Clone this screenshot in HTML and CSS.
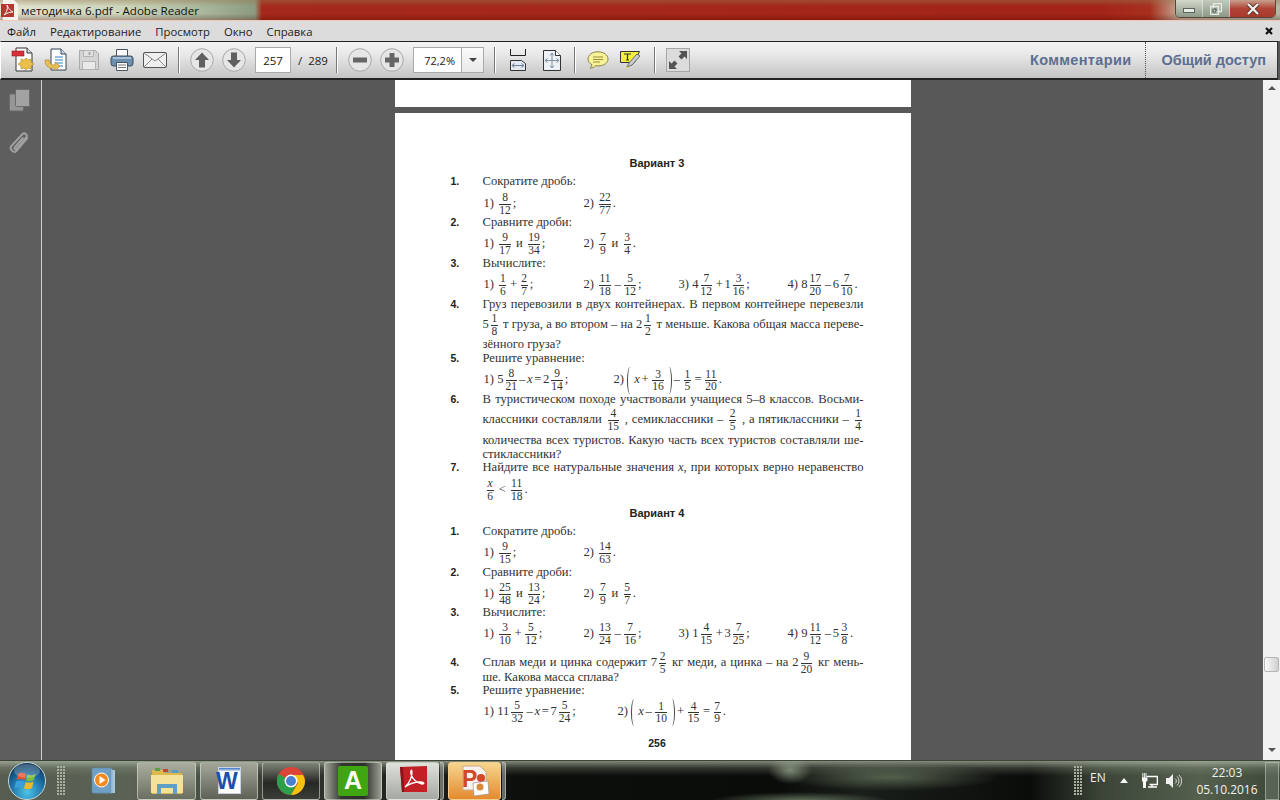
FILE: index.html
```html
<!DOCTYPE html>
<html lang="ru">
<head>
<meta charset="utf-8">
<title>методичка 6.pdf - Adobe Reader</title>
<link rel="stylesheet" href="styles.css">
</head>
<body>
<div class="app">
  <header class="titlebar">
    <svg class="app-icon" width="18" height="20" viewBox="0 0 18 20"><path d="M2 0h11l4 4v16H2z" fill="#f4f0ec"/><path d="M0 4h13v13H0z" fill="#b3201c" opacity=".9"/><path d="M3 15c3-3 4-7 3-10 1 2 2 5 6 7-3 0-6 1-9 3z" fill="none" stroke="#fff" stroke-width="1"/></svg>
    <span class="title-text">методичка 6.pdf - Adobe Reader</span>
    <div class="win-btns">
      <span class="win-btn win-min"><svg width="12" height="6" viewBox="0 0 12 6"><rect x=".5" y=".5" width="11" height="4" fill="#e8ece6" stroke="#59635a"/></svg></span>
      <span class="win-btn win-max"><svg width="12" height="12" viewBox="0 0 12 12"><path d="M3.5.5h8v8h-8z M.5 3.5h8v8h-8z" fill="none" stroke="#e8ece6" stroke-width="1.3"/><path d="M3 6h3v3H3z" fill="none" stroke="#48524a"/></svg></span>
      <span class="win-btn win-close"><svg width="14" height="12" viewBox="0 0 14 12"><path d="M2 1l10 10M12 1L2 11" stroke="#59302a" stroke-width="4"/><path d="M2 1l10 10M12 1L2 11" stroke="#eef0ee" stroke-width="2.4"/></svg></span>
    </div>
  </header>

  <nav class="menubar">
    <span>Файл</span><span>Редактирование</span><span>Просмотр</span><span>Окно</span><span>Справка</span>
    <svg class="menu-close" width="8" height="8" viewBox="0 0 8 8"><path d="M1 1l6 6M7 1L1 7" stroke="#111" stroke-width="2.2"/></svg>
  </nav>

  <div class="toolbar">
    <span class="tb tb33"><svg width="24" height="26" viewBox="0 0 24 26"><path d="M5 1h11l5 5v18H5z" fill="#fff" stroke="#333"/><path d="M16 1v5h5" fill="#ddd" stroke="#333"/><rect x="1" y="4" width="12" height="5" fill="#d8303a" stroke="#8f1b22" stroke-width=".6"/><path d="M15 11l2 2 3-1 0 3 3 2-3 2 0 3-3-1-2 2-2-2-3 1 0-3-3-2 3-2 0-3 3 1z" fill="#eac04a" stroke="#b58a22" stroke-width=".6"/></svg></span>
    <span class="tb tb33"><svg width="24" height="24" viewBox="0 0 24 24"><path d="M7 1h10l5 5v16H7z" fill="#fff" stroke="#345"/><path d="M17 1v5h5" fill="#cde" stroke="#345"/><path d="M11 9h8M11 12h8M11 15h8M12 18h7" stroke="#2d86c7" stroke-width="1.2"/><path d="M1 12c0 7 5 9 10 8v3l5-5-5-4v3c-4 0-6-2-6-5z" fill="#e9bf58" stroke="#b08a30" stroke-width=".7"/></svg></span>
    <span class="tb tb33"><svg width="22" height="22" viewBox="0 0 22 22"><path d="M1.500 1.500h16l3 3v16h-19z" fill="#d4d4d4" stroke="#aaa"/><path d="M5.500 1.500h10v6h-10z" fill="#e2e2e2" stroke="#b3b3b3"/><path d="M4.500 12.500h13v8h-13z" fill="#e9e9e9" stroke="#b3b3b3"/><path d="M11.500 3v3" stroke="#aaa" stroke-width="2"/></svg></span>
    <span class="tb tb33"><svg width="24" height="24" viewBox="0 0 24 24"><path d="M6.500 1.500h11v7h-11z" fill="#fff" stroke="#4b5560"/><rect x="1" y="8" width="22" height="10" rx="2.500" fill="#6d8fae" stroke="#3c4c5c"/><rect x="3" y="9" width="18" height="2" fill="#a9c1d6"/><path d="M6.500 14.500h11v8h-11z" fill="#fff" stroke="#4b5560"/><path d="M8 17h8M8 19.500h8" stroke="#777"/></svg></span>
    <span class="tb tb33"><svg width="24" height="16" viewBox="0 0 24 16"><rect x=".5" y=".5" width="23" height="15" rx="1" fill="#f0f0f0" stroke="#555"/><path d="M1 1l11 8 11-8M1 15l8-8M23 15l-8-8" fill="none" stroke="#888"/></svg></span>
    <span class="sep sep7"></span>
    <span class="tb tb32 ml7"><svg width="24" height="24" viewBox="0 0 24 24"><circle cx="12" cy="12" r="11.300" fill="#e6e6e6" stroke="#a8a8a8"/><path d="M12 4.500l7 7.500h-4v7.500H9V12H5z" fill="#606060"/></svg></span>
    <span class="tb tb32"><svg width="24" height="24" viewBox="0 0 24 24"><circle cx="12" cy="12" r="11.300" fill="#e6e6e6" stroke="#a8a8a8"/><path d="M12 19.500L5 12h4V4.500h6V12h4z" fill="#606060"/></svg></span>
    <span class="field page-field">257</span>
    <span class="page-total">/&nbsp; 289</span>
    <span class="sep"></span>
    <span class="tb tb32 ml7"><svg width="24" height="24" viewBox="0 0 24 24"><circle cx="12" cy="12" r="11.300" fill="#e6e6e6" stroke="#a8a8a8"/><rect x="5" y="9.500" width="14" height="5" fill="#666"/></svg></span>
    <span class="tb tb32"><svg width="24" height="24" viewBox="0 0 24 24"><circle cx="12" cy="12" r="11.300" fill="#e6e6e6" stroke="#a8a8a8"/><path d="M9.500 5h5v4.500H19v5h-4.500V19h-5v-4.500H5v-5h4.500z" fill="#666"/></svg></span>
    <span class="zoom-field"><span class="zoom-value">72,2%</span><span class="zoom-drop"></span></span>
    <span class="sep sep10"></span>
    <span class="tb tb34 ml6"><svg width="18" height="22" viewBox="0 0 18 22"><path d="M1.500 0v6.500h15V0" fill="none" stroke="#222"/><path d="M1.500 21.500v-10h11l4 3v7z" fill="#e3e9f0" stroke="#333"/><path d="M3 16.500h12M3 16.500l2.500-2M3 16.500l2.500 2M15 16.500l-2.500-2M15 16.500l-2.500 2" fill="none" stroke="#6d8198"/></svg></span>
    <span class="tb tb34"><svg width="18" height="21" viewBox="0 0 18 21"><path d="M.500.500h12l5 5v15H.500z" fill="#eef1f5" stroke="#333"/><path d="M12.500.500v5h5" fill="#fff" stroke="#333"/><path d="M9 3v15M2 10.500h14M9 3L7 5.500M9 3l2 2.500M9 18l-2-2.500M9 18l2-2.500M2 10.500L4.500 8.500M2 10.500l2.500 2M16 10.500l-2.500-2M16 10.500l-2.500 2" fill="none" stroke="#7d90a5"/></svg></span>
    <span class="sep sep5"></span>
    <span class="tb tb32 ml7"><svg width="22" height="18" viewBox="0 0 22 18"><path d="M11 .800C5 .800 1 4 1 8c0 2.500 1.500 4.500 4 5.700-.2 1.500-1 2.500-2 3.500 2.500-.2 4.500-1.200 5.500-2.500 1 .2 1.700.2 2.500.2 6 0 10-3 10-6.900S17 .800 11 .800z" fill="#f8f299" stroke="#8b8446"/><path d="M6 6h10M6 8.500h10M6 11h7" stroke="#9a8d3e"/></svg></span>
    <span class="tb tb33"><svg width="21" height="18" viewBox="0 0 21 18"><path d="M.500.500h19l-5 11H.500z" fill="#f5ee3e" stroke="#333"/><path d="M4 3h7M7.500 3v6M6 9h3" stroke="#333" stroke-width="1.200" fill="none"/><path d="M7 16l2-4 8-9 3 2-8 9z" fill="#c8cdd2" stroke="#666"/><path d="M5 17.500l2-2 3 .5z" fill="#e2cf39"/></svg></span>
    <span class="sep sep7"></span>
    <span class="tb tb34 ml6"><svg class="fs-icon" width="24" height="24" viewBox="0 0 24 24"><rect x=".500" y=".500" width="23" height="23" fill="#dcdcdc" stroke="#a6a6a6"/><path d="M13 3h8v8l-2.500-2.500-3 3-3-3 3-3zM11 21H3v-8l2.500 2.500 3-3 3 3-3 3z" fill="#555"/></svg></span>
    <div class="tool-links">
      <span class="tool-link link-a">Комментарии</span>
      <span class="tool-link link-b">Общий доступ</span>
    </div>
  </div>

  <main class="workspace">
    <aside class="sidebar">
      <svg class="side-pages" width="21" height="23" viewBox="0 0 21 23"><rect x=".500" y="5" width="14" height="17" rx="1" fill="#969696" stroke="#6b6b6b"/><rect x="6.500" y=".500" width="14" height="17" rx="1" fill="#a2a2a2" stroke="#6b6b6b"/></svg>
      <svg class="side-clip" width="24" height="26" viewBox="0 0 22 24"><path d="M19 6L8.500 18.500c-2 2.300-7 -1.500-4.600-4.500L14 3c2-2 5.500 .5 3.700 3L8.500 16.500c-1 1-2.500 0-1.500-1.500l8-9" fill="none" stroke="#a0a0a0" stroke-width="1.800"/></svg>
    </aside>
    <section class="viewer">
      <div class="sheet-end"></div>
      <article class="sheet">
        <h2 class="variant">Вариант 3</h2>
        <div class="row g4"><span class="num">1.</span><span>Сократите дробь:</span></div>
        <div class="eq g3"><span>1)&nbsp; <span class="f"><span>8</span><span>12</span></span>;</span><span>2)&nbsp; <span class="f"><span>22</span><span>77</span></span>.</span></div>
        <div class="row"><span class="num">2.</span><span>Сравните дроби:</span></div>
        <div class="eq g2"><span>1)&nbsp; <span class="f"><span>9</span><span>17</span></span>&nbsp; и&nbsp; <span class="f"><span>19</span><span>34</span></span>;</span><span>2)&nbsp; <span class="f"><span>7</span><span>9</span></span>&nbsp; и&nbsp; <span class="f"><span>3</span><span>4</span></span>.</span></div>
        <div class="row g1"><span class="num">3.</span><span>Вычислите:</span></div>
        <div class="eq g2"><span>1)&nbsp; <span class="f"><span>1</span><span>6</span></span> + <span class="f"><span>2</span><span>7</span></span>;</span><span>2)&nbsp; <span class="f"><span>11</span><span>18</span></span> – <span class="f"><span>5</span><span>12</span></span>;</span><span>3)&nbsp; 4<span class="f"><span>7</span><span>12</span></span> + 1<span class="f"><span>3</span><span>16</span></span>;</span><span>4)&nbsp; 8<span class="f"><span>17</span><span>20</span></span> – 6<span class="f"><span>7</span><span>10</span></span>.</span></div>
        <div class="row g1"><span class="num">4.</span><span class="just">Груз перевозили в двух контейнерах. В первом контейнере перевезли</span></div>
        <div class="line tall g1 just">5<span class="f"><span>1</span><span>8</span></span> т груза, а во втором – на 2<span class="f"><span>1</span><span>2</span></span> т меньше. Какова общая масса переве-</div>
        <div class="line g1">зённого груза?</div>
        <div class="row"><span class="num">5.</span><span>Решите уравнение:</span></div>
        <div class="eq eq-a g2"><span>1)&nbsp; 5<span class="f"><span>8</span><span>21</span></span>– <i>x</i> = 2<span class="f"><span>9</span><span>14</span></span>;</span><span>2)&nbsp; <span class="paren paren-l"></span><i>x</i> + <span class="f"><span>3</span><span>16</span></span><span class="paren paren-r"></span>– <span class="f"><span>1</span><span>5</span></span> = <span class="f"><span>11</span><span>20</span></span>.</span></div>
        <div class="row g1"><span class="num">6.</span><span class="just">В туристическом походе участвовали учащиеся 5–8 классов. Восьми-</span></div>
        <div class="line tall g1 just">классники составляли <span class="f"><span>4</span><span>15</span></span> , семиклассники – <span class="f"><span>2</span><span>5</span></span> , а пятиклассники – <span class="f"><span>1</span><span>4</span></span></div>
        <div class="line g2 just">количества всех туристов. Какую часть всех туристов составляли ше-</div>
        <div class="line">стиклассники?</div>
        <div class="row up1"><span class="num">7.</span><span class="just">Найдите все натуральные значения <i>x</i>, при которых верно неравенство</span></div>
        <div class="line tall g3 formula"><span class="f"><span><i>x</i></span><span>6</span></span> &lt; <span class="f"><span>11</span><span>18</span></span>.</div>

        <h2 class="variant g5">Вариант 4</h2>
        <div class="row g4"><span class="num">1.</span><span>Сократите дробь:</span></div>
        <div class="eq g2"><span>1)&nbsp; <span class="f"><span>9</span><span>15</span></span>;</span><span>2)&nbsp; <span class="f"><span>14</span><span>63</span></span>.</span></div>
        <div class="row g1"><span class="num">2.</span><span>Сравните дроби:</span></div>
        <div class="eq g2"><span>1)&nbsp; <span class="f"><span>25</span><span>48</span></span>&nbsp; и&nbsp; <span class="f"><span>13</span><span>24</span></span>;</span><span>2)&nbsp; <span class="f"><span>7</span><span>9</span></span>&nbsp; и&nbsp; <span class="f"><span>5</span><span>7</span></span>.</span></div>
        <div class="row"><span class="num">3.</span><span>Вычислите:</span></div>
        <div class="eq g2"><span>1)&nbsp; <span class="f"><span>3</span><span>10</span></span> + <span class="f"><span>5</span><span>12</span></span>;</span><span>2)&nbsp; <span class="f"><span>13</span><span>24</span></span> – <span class="f"><span>7</span><span>16</span></span>;</span><span>3)&nbsp; 1<span class="f"><span>4</span><span>15</span></span> + 3<span class="f"><span>7</span><span>25</span></span>;</span><span>4)&nbsp; 9<span class="f"><span>11</span><span>12</span></span> – 5<span class="f"><span>3</span><span>8</span></span>.</span></div>
        <div class="row tall g5"><span class="num">4.</span><span class="just">Сплав меди и цинка содержит 7<span class="f"><span>2</span><span>5</span></span> кг меди, а цинка – на 2<span class="f"><span>9</span><span>20</span></span> кг мень-</span></div>
        <div class="line up4">ше. Какова масса сплава?</div>
        <div class="row up1"><span class="num">5.</span><span>Решите уравнение:</span></div>
        <div class="eq eq-b g2"><span>1)&nbsp; 11<span class="f"><span>5</span><span>32</span></span> – <i>x</i> = 7<span class="f"><span>5</span><span>24</span></span>;</span><span>2)&nbsp; <span class="paren paren-l"></span><i>x</i> – <span class="f"><span>1</span><span>10</span></span><span class="paren paren-r"></span>+ <span class="f"><span>4</span><span>15</span></span> = <span class="f"><span>7</span><span>9</span></span>.</span></div>
        <div class="page-no">256</div>
      </article>
    </section>
    <div class="scrollbar">
      <span class="arrow-up"></span>
      <span class="thumb"></span>
      <span class="arrow-down"></span>
    </div>
  </main>

  <footer class="taskbar">
    <svg class="orb" width="40" height="40" viewBox="0 0 40 40">
      <defs><radialGradient id="orbg" cx=".5" cy=".8" r=".8"><stop offset="0" stop-color="#4cc4e8"/><stop offset=".6" stop-color="#1a6aa0"/><stop offset="1" stop-color="#0e3050"/></radialGradient></defs>
      <circle cx="20" cy="20" r="18.500" fill="url(#orbg)" stroke="#c5d6da" stroke-width="1"/>
      <path d="M11 13c3-2 5-1 8 0l-1.500 6c-3-1-5-1.500-8 0z" fill="#e8502e"/><path d="M20.500 13.500c3 1.200 5 1 8-.5l-1.500 6c-3 1.500-5 1.500-8 .5z" fill="#7dbb3a"/><path d="M9 20.500c3-1.500 5-1 8 0L15.500 27c-3-1-5-1-8 .5z" fill="#3c9fe0"/><path d="M18.500 21c3 1 5 1 8-.5L25 27c-3 1.500-5 1.500-8 .5z" fill="#f0b82e"/>
      <ellipse cx="20" cy="10" rx="13" ry="7" fill="#fff" opacity=".22"/>
    </svg>
    <span class="grip"></span>
    <svg class="quick" width="28" height="28" viewBox="0 0 28 28"><rect x="8" y="3" width="17" height="23" fill="#a9c6dc"/><rect x="5" y="2" width="17" height="24" fill="#c7dbea" stroke="#7ea4c0" stroke-width=".6"/><rect x="2" y="1" width="19" height="25" rx="1" fill="#6fa0c4" stroke="#5a88aa" stroke-width=".6"/><circle cx="11.500" cy="13" r="7" fill="#f28a20" stroke="#fff" stroke-width="1"/><path d="M9.500 9l6 4-6 4z" fill="#fff"/></svg>

    <span class="task task-a"><svg width="34" height="30" viewBox="0 0 34 30"><path d="M2 4h11l2 3h17v21H2z" fill="#dcb94e"/><rect x="5" y="2" width="5" height="3" fill="#5a9f46"/><rect x="13" y="3" width="5" height="3" fill="#c04a30"/><rect x="22" y="4" width="6" height="3" fill="#5a9bc0"/><path d="M1 9h32v18H1z" fill="#f5e29a"/><path d="M7 28V18h20v10h-4v-6H11v6z" fill="#5f9fc6"/></svg></span>
    <span class="task task-b"><span class="word"><span class="word-doc"></span><span class="word-l">W</span></span></span>
    <span class="task task-c"><svg width="28" height="28" viewBox="0 0 28 28"><circle cx="14" cy="14" r="14" fill="#db4437"/><path d="M14 14L1.800 7A14 14 0 0 0 14 28l7-14z" fill="#2d9f4b"/><path d="M14 8h12a14 14 0 0 1 2 6 14 14 0 0 1-14 14l7-12z" fill="#f4c20d"/><circle cx="14" cy="14" r="6.500" fill="#fff"/><circle cx="14" cy="14" r="5" fill="#4a80d0"/></svg></span>
    <span class="task task-d"><span class="green-a">A</span></span>
    <span class="task task-e"><svg width="30" height="30" viewBox="0 0 30 30"><path d="M2 1l27-1v26H4z" fill="#c31f27"/><path d="M2 1l2 25h2L5 1z" fill="#8a1218"/><path d="M7 21c5-4 7-11 7-15 0-3-2-2-1 2 1 5 6 9 11 10 3 0 2-2-2-2-5 0-11 2-15 5z" fill="none" stroke="#fff" stroke-width="1.300"/></svg></span>
    <span class="task-tail"></span>
    <span class="task task-f"><svg width="30" height="32" viewBox="0 0 30 32"><path d="M3 1h17l6 6v18H3z" fill="#f6f1ea" stroke="#cda98a"/><text x="2" y="22" class="ppt-p">P</text><circle cx="21" cy="13" r="4" fill="#d24726"/><path d="M13 18l15-2 1 13-15 2z" fill="#fff" stroke="#888" stroke-width=".6"/><circle cx="20" cy="22" r="3.500" fill="#d88a3a"/></svg></span>
    <span class="task-tail"></span>
    <span class="task-space"></span>
    <span class="grip grip-tray"></span>
    <span class="lang">EN</span>
    <span class="tray-up"></span>
    <svg class="net" width="16" height="15" viewBox="0 0 16 15"><path d="M4.500 3.500h11v8h-8" fill="none" stroke="#fff" stroke-width="1.600"/><path d="M10 11v2.500M6 14h9" stroke="#fff" stroke-width="1.400"/><path d="M0 5h5v3H3.500v7H1.500V8H0zM.8 0v5M4 0v5M2.400 0v5" stroke="#fff" fill="#fff" stroke-width=".9"/></svg>
    <svg class="vol" width="16" height="14" viewBox="0 0 16 14"><path d="M0 4h3l4-4v14l-4-4H0z" fill="#f0f0f0"/><path d="M9 4.500a3 3 0 0 1 0 5M11 2.500a6 6 0 0 1 0 9M13 1a8 8 0 0 1 0 12" fill="none" stroke="#d8d8d8"/></svg>
    <div class="clock"><span>22:03</span><span>05.10.2016</span></div>
    <span class="show-desktop"></span>
  </footer>
</div>
</body>
</html>
```

FILE: styles.css
```css
* { box-sizing: border-box; }
html, body { margin: 0; padding: 0; }
body { width: 1280px; height: 800px; overflow: hidden; font-family: "Open Sans", "Liberation Sans", sans-serif; background: #585858; }
.app { width: 1280px; height: 800px; display: flex; flex-direction: column; overflow: hidden; }

/* Title bar */
.titlebar {
  height: 21px; display: flex; align-items: center; position: relative; flex: none;
  border-bottom: 1px solid #f0c8b8;
  background:
    linear-gradient(180deg, rgba(150,120,80,.45) 0, rgba(150,40,20,0) 32%, rgba(0,0,0,0) 68%, rgba(70,0,0,.28) 100%),
    linear-gradient(90deg, #e2e4d2 0, #cbd4b8 130px, #aab89c 200px, #8c9a80 255px, #a5291a 262px, #a32417 1100px, #a8301f 1150px, #c6b8a0 1182px, #b0b8a4 1280px);
}
.app-icon { margin-left: 1px; flex: none; }
.title-text { margin-left: 2px; font-size: 11.600px; color: #111; white-space: nowrap; }
.win-btns { position: absolute; right: 4px; top: 0; height: 18px; width: 101px; display: flex; border: 1px solid rgba(60,40,30,.75); border-top: 0; border-radius: 0 0 5px 5px; overflow: hidden; }
.win-btn { display: flex; align-items: center; justify-content: center; height: 100%; }
.win-min { width: 27px; background: linear-gradient(#d4d8cc, #8d9a88); border-right: 1px solid rgba(255,255,255,.4); padding-top: 4px; }
.win-max { width: 27px; background: linear-gradient(#c2cabc, #8c9886); border-right: 1px solid rgba(255,255,255,.4); }
.win-close { flex: 1; background: linear-gradient(#c9a08e, #b04436 50%, #a8382a); }

/* Menu */
.menubar { height: 20px; flex: none; display: flex; align-items: center; gap: 14px; padding-left: 7px; background: #dcdcdc; font-size: 11.300px; color: #222; position: relative; }
.menu-close { margin-left: auto; margin-right: 7px; }

/* Toolbar */
.toolbar {
  height: 39px; flex: none; display: flex; align-items: center; padding-left: 5px; margin-right: 2px;
  border: 1px solid #222; border-left-color: #fff; border-right-color: #333; border-bottom-width: 2px;
  background: linear-gradient(#f4f4f4 0, #e8e8e8 35%, #cfcfcf 80%, #c4c4c4 100%);
  font-size: 11.500px; color: #222;
}
.tb { height: 30px; display: flex; align-items: center; justify-content: center; flex: none; }
.tb32 { width: 32px; } .tb33 { width: 33px; } .tb34 { width: 34px; }
.ml6 { margin-left: 6px; } .ml7 { margin-left: 7px; }
.sep { width: 1px; height: 26px; background: #777; box-shadow: 1px 0 0 #fff; flex: none; }
.sep5 { margin-left: 5px; } .sep7 { margin-left: 7px; } .sep10 { margin-left: 10px; }
.field { background: #fff; border: 1px solid #aaa; }
.page-field { width: 36px; height: 26px; margin-left: 5px; display: flex; align-items: center; justify-content: center; font-size: 11.500px; }
.page-total { width: 38px; margin-left: 7px; white-space: nowrap; }
.zoom-field { width: 71px; height: 26px; margin-left: 5px; display: flex; border: 1px solid #aaa; background: #fff; }
.zoom-value { width: 48px; display: flex; align-items: center; justify-content: flex-end; padding-right: 6px; font-size: 11px; border-right: 1px solid #aaa; }
.zoom-drop { flex: 1; position: relative; background: linear-gradient(#fafafa, #e9e9e9); }
.zoom-drop::after { content: ""; position: absolute; left: 7px; top: 10px; border: 4px solid transparent; border-top: 4px solid #444; border-left-width: 4px; border-right-width: 4px; }
.tool-links { margin-left: auto; height: 100%; display: flex; align-items: center; font-family: "Liberation Sans", sans-serif; font-weight: 700; font-size: 14.500px; color: #5b6f90; }
.tool-link { white-space: nowrap; display: flex; align-items: center; height: 100%; }
.link-a { padding-right: 14px; border-right: 1px dotted #555; letter-spacing: .35px; }
.link-b { padding: 0 11px 0 15px; }

/* Workspace */
.workspace { flex: 1; min-height: 0; display: flex; background: #585858; }
.sidebar { width: 42px; flex: none; background: #5e5e5e; border-right: 1px solid #cfcfcf; display: flex; flex-direction: column; align-items: center; padding-top: 9px; gap: 19px; padding-right: 3px; }
.viewer { flex: 1; min-width: 0; display: flex; flex-direction: column; align-items: center; overflow: hidden; }
.sheet-end { width: 516px; height: 27px; background: #fff; flex: none; }
.sheet { width: 516px; flex: none; height: 700px; margin-top: 6px; background: #fff; padding: 43px 47px 0 56px; font-family: "Liberation Serif", serif; font-size: 12.600px; color: #333; }
.variant { margin: 0; height: 14px; line-height: 14px; text-align: center; font-family: "Liberation Sans", sans-serif; font-size: 11px; font-weight: 700; color: #222; }
.row { display: grid; grid-template-columns: 32px 1fr; height: 14px; line-height: 14px; }
.num { font-family: "Liberation Sans", sans-serif; font-weight: 700; font-size: 10.500px; color: #222; }
.line { margin-left: 32px; height: 14px; line-height: 14px; white-space: nowrap; }
.just { text-align-last: justify; white-space: normal; }
.tall { height: 24px; line-height: 24px; }
.formula { padding-left: 2px; }
.eq { display: grid; grid-template-columns: 100px 95px 109px 1fr; height: 24px; line-height: 24px; margin-left: 33px; white-space: nowrap; word-spacing: -1.500px; }
.eq-a { grid-template-columns: 130px 1fr; }
.eq-b { grid-template-columns: 134px 1fr; }
.g1 { margin-top: 1px; } .g2 { margin-top: 2px; } .g3 { margin-top: 3px; } .g4 { margin-top: 4px; } .g5 { margin-top: 5px; }
.up1 { margin-top: -1px; } .up4 { margin-top: -4px; }
.f { display: inline-flex; flex-direction: column; vertical-align: middle; text-align: center; text-align-last: center; font-size: 11.500px; line-height: 11.500px; margin: 0 2px; min-width: 7px; }
.f > span:first-child { border-bottom: 1px solid #333; }
.paren { display: inline-block; width: 6px; height: 27px; vertical-align: middle; border: 0 solid #444; border-radius: 50%; }
.paren-l { border-left-width: 1.400px; margin-right: 1px; }
.paren-r { border-right-width: 1.400px; margin-right: 2px; }
.page-no { margin-top: 13px; height: 14px; line-height: 14px; text-align: center; font-family: "Liberation Sans", sans-serif; font-size: 10.500px; font-weight: 700; color: #222; }

/* Scrollbar */
.scrollbar { width: 17px; flex: none; background: #f2f2f2; display: flex; flex-direction: column; align-items: center; padding-top: 6px; position: relative; }
.arrow-up { width: 0; height: 0; border: 4px solid transparent; border-top: 0; border-bottom: 4px solid #555; }
.thumb { width: 15px; height: 15px; margin-top: 567px; border: 1px solid #b5b5b5; border-radius: 2px; background: linear-gradient(90deg, #fafafa, #cfcfcf); }
.arrow-down { width: 0; height: 0; margin-top: 76px; border: 4px solid transparent; border-bottom: 0; border-top: 4px solid #555; }

/* Taskbar */
.taskbar {
  height: 40px; flex: none; display: flex; align-items: center; position: relative; color: #fff;
  border-top: 1px solid #3c4438;
  background:
    linear-gradient(180deg, rgba(180,190,170,.7) 0, rgba(140,150,130,.3) 18%, rgba(0,0,0,0) 38%),
    radial-gradient(ellipse 22px 14px at 790px 9px, rgba(150,165,140,.8), rgba(150,165,140,0)),
    radial-gradient(ellipse 90px 9px at 800px 40px, rgba(130,150,120,.75), rgba(130,150,120,0)),
    radial-gradient(ellipse 110px 14px at 890px 16px, rgba(110,125,100,.7), rgba(110,125,100,0)),
    linear-gradient(90deg, #555d50 0, #5a6355 130px, #2a2e28 330px, #0c0f0c 520px, #0a0c0a 780px, #1a1f1a 860px, #0a0c0a 1030px, #3b4437 1100px, #56604e 1200px, #3c4739 1280px);
}
.orb { margin-left: 7px; flex: none; }
.grip { width: 9px; height: 30px; flex: none; margin-left: 10px; background-image: radial-gradient(circle at 1px 1px, #a8b0a0 0.8px, transparent 1px); background-size: 3px 3px; }
.quick { margin-left: 24px; flex: none; }
.task { width: 59px; height: 38px; margin-left: 4px; flex: none; border: 1px solid rgba(225,230,220,.55); border-radius: 3px; display: flex; align-items: center; justify-content: center; background: linear-gradient(rgba(210,215,205,.65), rgba(120,125,115,.6)); }
.task-a { margin-left: 19px; background: linear-gradient(#a9ae9f, #6a6f62); }
.task-b { width: 58px; background: linear-gradient(#a2a79a, #5e6256); }
.task-c { width: 58px; background: linear-gradient(#7f8478, #262824 55%, #3a3c36); }
.task-d { width: 58px; background: linear-gradient(90deg, #9fa498, #33352f 30%, #2c2e29 70%, #9a9e92); }
.task-e { width: 53px; background: linear-gradient(#dfe1db, #a5a8a0); }
.task-f { width: 53px; margin-left: 4px; border-color: #f0d090; background: linear-gradient(#f6d58e, #e58a2e); }
.task-tail { width: 4px; height: 38px; margin-left: 1px; flex: none; border: 1px solid rgba(225,230,220,.5); border-left: 0; border-radius: 0 3px 3px 0; background: rgba(190,195,185,.5); }
.task-space { flex: 1; }
.word { width: 26px; height: 28px; position: relative; display: block; }
.word-doc { position: absolute; left: 2px; top: 0; width: 23px; height: 27px; background: linear-gradient(#3a72c4, #fff 15%); border: 1px solid #c8d4e6; }
.word-l { position: absolute; left: 0; top: 2px; font-family: "Liberation Sans", sans-serif; font-weight: 700; font-size: 23px; line-height: 24px; color: #1d4fa8; }
.green-a { width: 30px; height: 30px; background: #3fa612; border-radius: 2px; display: flex; align-items: center; justify-content: center; font-family: "Liberation Sans", sans-serif; font-weight: 700; font-size: 25px; color: #fff; }
.ppt-p { font-family: "Liberation Sans", sans-serif; font-weight: 700; font-size: 23px; fill: #d24726; }
.grip-tray { margin-left: 0; margin-right: 7px; }
.lang { font-size: 12px; width: 28px; margin-top: -6px; flex: none; color: #eef0ea; }
.tray-up { width: 0; height: 0; border: 4px solid transparent; border-top: 0; border-bottom: 5px solid #f4f4f4; margin-left: 2px; flex: none; }
.net { margin-left: 14px; flex: none; }
.vol { margin-left: 8px; flex: none; }
.clock { width: 74px; margin-left: 8px; display: flex; flex-direction: column; align-items: center; font-size: 12px; line-height: 17px; color: #f0f2ec; flex: none; }
.show-desktop { width: 14px; height: 38px; margin-left: 1px; margin-right: 1px; border: 1px solid rgba(200,205,195,.55); background: rgba(150,155,145,.3); flex: none; }
```
